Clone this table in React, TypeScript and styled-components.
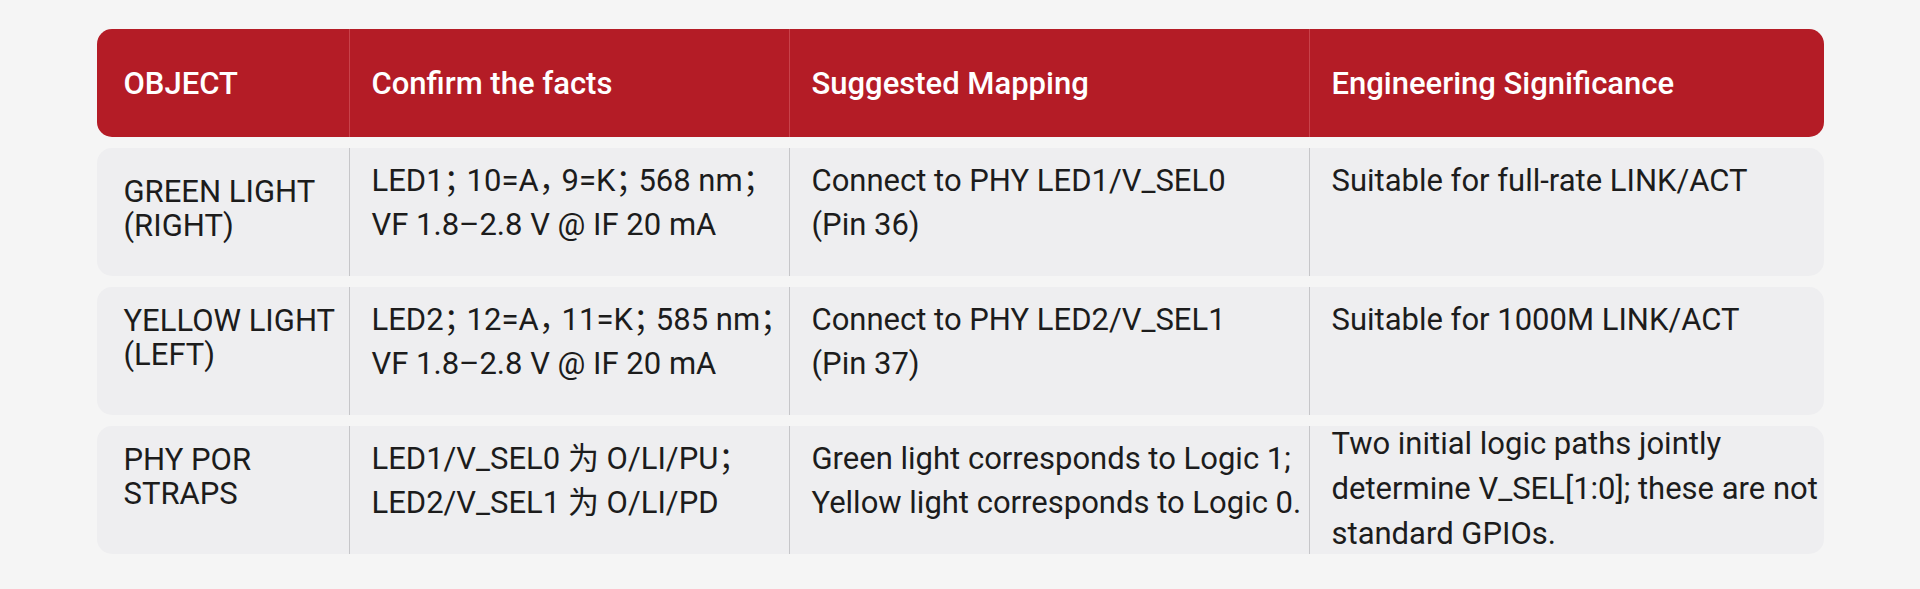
import React from 'react';
import styled, { createGlobalStyle } from 'styled-components';

const GlobalStyle = createGlobalStyle`
  html, body {
    margin: 0;
    padding: 0;
    background: #f5f5f5;
  }
  body {
    font-family: Roboto, "Noto Sans CJK SC", sans-serif;
    color: #1c1c1c;
  }
`;

const Table = styled.div`
  width: 1727px;
  margin: 29px auto 0;
  display: flex;
  flex-direction: column;
  gap: 11px;
`;

const columns = '252px 440px 520px 1fr';

const HeaderRow = styled.div`
  display: grid;
  grid-template-columns: ${columns};
  height: 108px;
  background: #b41c26;
  border-radius: 15px;
  overflow: hidden;
`;

const HeaderCell = styled.div<{ $first?: boolean }>`
  display: flex;
  align-items: center;
  padding-left: ${(p) => (p.$first ? '27px' : '22px')};
  font-size: 31px;
  font-weight: 500;
  color: #ffffff;
  border-left: ${(p) => (p.$first ? 'none' : '1.5px solid #c8424a')};
`;

const BodyRow = styled.div`
  display: grid;
  grid-template-columns: ${columns};
  height: 128px;
  background: #eeeef0;
  border-radius: 15px;
  overflow: hidden;
`;

const Cell = styled.div<{ $first?: boolean }>`
  padding: 0 12px 0 ${(p) => (p.$first ? 27 : 22)}px;
  font-size: 31px;
  white-space: nowrap;
  border-left: ${(p) => (p.$first ? 'none' : '1.5px solid #c6c6c9')};
`;

const Lines = styled.div<{ $first?: boolean; $top?: number; $lh?: number }>`
  margin-top: ${(p) => p.$top ?? (p.$first ? 17 : 11)}px;
  line-height: ${(p) => p.$lh ?? (p.$first ? 34 : 44)}px;
`;

// full-width punctuation sits a little tighter than a full em
const Punct = styled.span`
  letter-spacing: -0.3em;
  margin-right: 0.04em;
`;

type CellData = { lines: string[]; top?: number; lh?: number };

const headers = ['OBJECT', 'Confirm the facts', 'Suggested Mapping', 'Engineering Significance'];

const rows: CellData[][] = [
  [
    { lines: ['GREEN LIGHT', '(RIGHT)'], top: 27 },
    { lines: ['LED1；10=A，9=K；568 nm；', 'VF 1.8–2.8 V @ IF 20 mA'] },
    { lines: ['Connect to PHY LED1/V_SEL0', '(Pin 36)'] },
    { lines: ['Suitable for full-rate LINK/ACT'] },
  ],
  [
    { lines: ['YELLOW LIGHT', '(LEFT)'] },
    { lines: ['LED2；12=A，11=K；585 nm；', 'VF 1.8–2.8 V @ IF 20 mA'] },
    { lines: ['Connect to PHY LED2/V_SEL1', '(Pin 37)'] },
    { lines: ['Suitable for 1000M LINK/ACT'] },
  ],
  [
    { lines: ['PHY POR', 'STRAPS'] },
    { lines: ['LED1/V_SEL0 为 O/LI/PU；', 'LED2/V_SEL1 为 O/LI/PD'] },
    { lines: ['Green light corresponds to Logic 1;', 'Yellow light corresponds to Logic 0.'] },
    {
      lines: ['Two initial logic paths jointly', 'determine V_SEL[1:0]; these are not', 'standard GPIOs.'],
      top: -5,
      lh: 45,
    },
  ],
];

const renderLine = (line: string) =>
  line.split(/([；，])/).map((part, i) =>
    part === '；' || part === '，' ? <Punct key={i}>{part}</Punct> : part
  );

const App: React.FC = () => {
  return (
    <>
      <GlobalStyle />
      <Table>
        <HeaderRow>
          {headers.map((h, i) => (
            <HeaderCell key={h} $first={i === 0}>
              {h}
            </HeaderCell>
          ))}
        </HeaderRow>
        {rows.map((row, r) => (
          <BodyRow key={r}>
            {row.map((cell, c) => (
              <Cell key={c} $first={c === 0}>
                <Lines $first={c === 0} $top={cell.top} $lh={cell.lh}>
                  {cell.lines.map((line, l) => (
                    <div key={l}>{renderLine(line)}</div>
                  ))}
                </Lines>
              </Cell>
            ))}
          </BodyRow>
        ))}
      </Table>
    </>
  );
};

export default App;
